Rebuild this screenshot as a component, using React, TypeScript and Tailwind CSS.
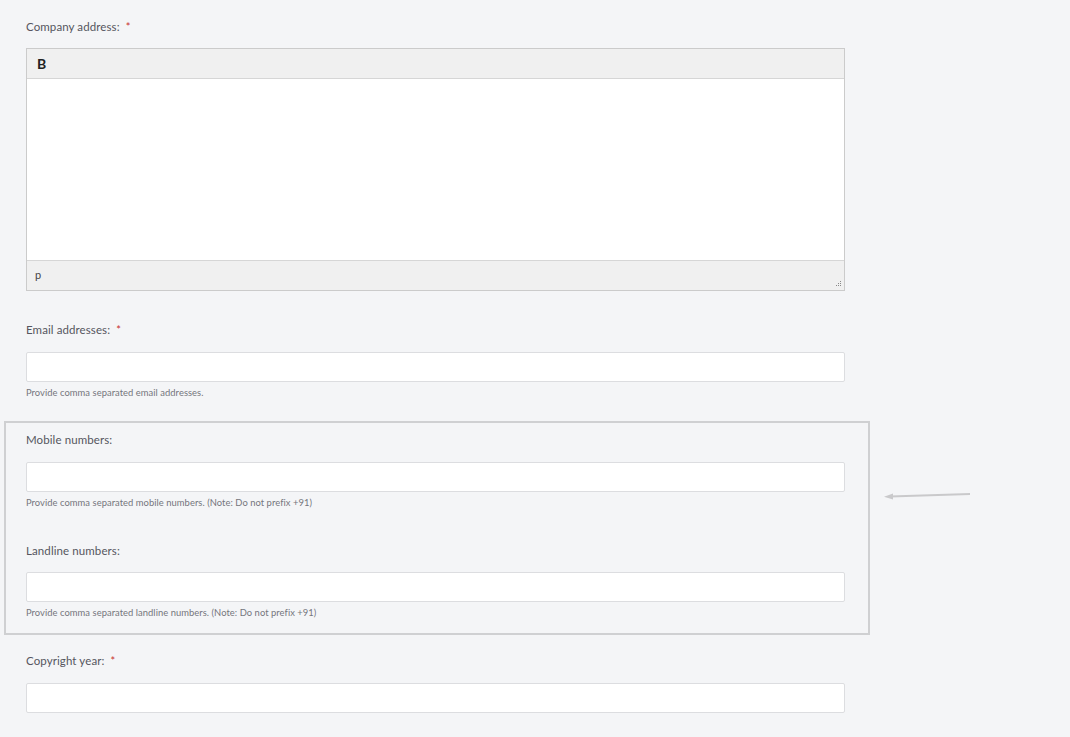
const Label = ({ text, required }: { text: string; required?: boolean }) => (
  <div className="flex items-center gap-[6px] text-[11.5px] leading-[14px] tracking-[0.1px] text-[#55565e]">
    <span>{text}</span>
    {required && <span className="text-[11px] leading-[14px] text-[#c8302d] -mt-[1px]">*</span>}
  </div>
);

const Input = () => (
  <input
    type="text"
    className="block w-full h-[30px] bg-white border border-[#dcdde0] rounded-[2px] px-2 text-[12px] focus:outline-none"
  />
);

const Help = ({ text }: { text: string }) => (
  <p className="mt-[5px] text-[9.4px] leading-[12px] tracking-[0.05px] text-[#75767d]">{text}</p>
);

const App = () => {
  return (
    <div
      className="relative w-[1070px] h-[737px] overflow-hidden bg-[#f4f5f7]"
      style={{ fontFamily: "Lato, 'Open Sans', sans-serif" }}
    >
      <div className="w-[819px] ml-[26px] pt-[20px]">
        <Label text="Company address:" required />
        <div className="mt-[14px] border border-[#cbcbcb] bg-white">
          <div className="h-[30px] bg-[#f0f0f0] border-b border-[#d6d6d6] flex items-center px-[10px]">
            <span className="text-[14px] font-bold text-[#222]">B</span>
          </div>
          <div className="h-[181px] bg-white" />
          <div className="relative h-[30px] bg-[#f0f0f0] border-t border-[#d6d6d6] flex items-center px-[8px]">
            <span className="text-[11px] text-[#444]">p</span>
            <svg className="absolute right-[2px] bottom-[2px]" width="8" height="8" viewBox="0 0 8 8">
              <rect x="6" y="1" width="1" height="1" fill="#888" />
              <rect x="4" y="3" width="1" height="1" fill="#888" />
              <rect x="6" y="3" width="1" height="1" fill="#888" />
              <rect x="2" y="5" width="1" height="1" fill="#888" />
              <rect x="4" y="5" width="1" height="1" fill="#888" />
              <rect x="6" y="5" width="1" height="1" fill="#888" />
            </svg>
          </div>
        </div>

        <div className="mt-[32px]">
          <Label text="Email addresses:" required />
        </div>
        <div className="mt-[15px]">
          <Input />
        </div>
        <Help text="Provide comma separated email addresses." />

        <div className="mt-[22px] -ml-[22px] w-[866px] border-2 border-[#cfd0d2] pl-[20px] pr-[23px] pt-[10px] pb-[14px]">
          <Label text="Mobile numbers:" />
          <div className="mt-[15px]">
            <Input />
          </div>
          <Help text="Provide comma separated mobile numbers. (Note: Do not prefix +91)" />

          <div className="mt-[35px]">
            <Label text="Landline numbers:" />
          </div>
          <div className="mt-[14px]">
            <Input />
          </div>
          <Help text="Provide comma separated landline numbers. (Note: Do not prefix +91)" />
        </div>

        <div className="mt-[19px]">
          <Label text="Copyright year:" required />
        </div>
        <div className="mt-[15px]">
          <Input />
        </div>
      </div>

      <svg className="absolute left-[880px] top-[488px]" width="95" height="16" viewBox="0 0 95 16">
        <line x1="90" y1="6" x2="10" y2="8.5" stroke="#c9c9cb" strokeWidth="2" />
        <polygon points="4,8.7 13,5.5 13,11.5" fill="#c9c9cb" />
      </svg>
    </div>
  );
};

export default App;
